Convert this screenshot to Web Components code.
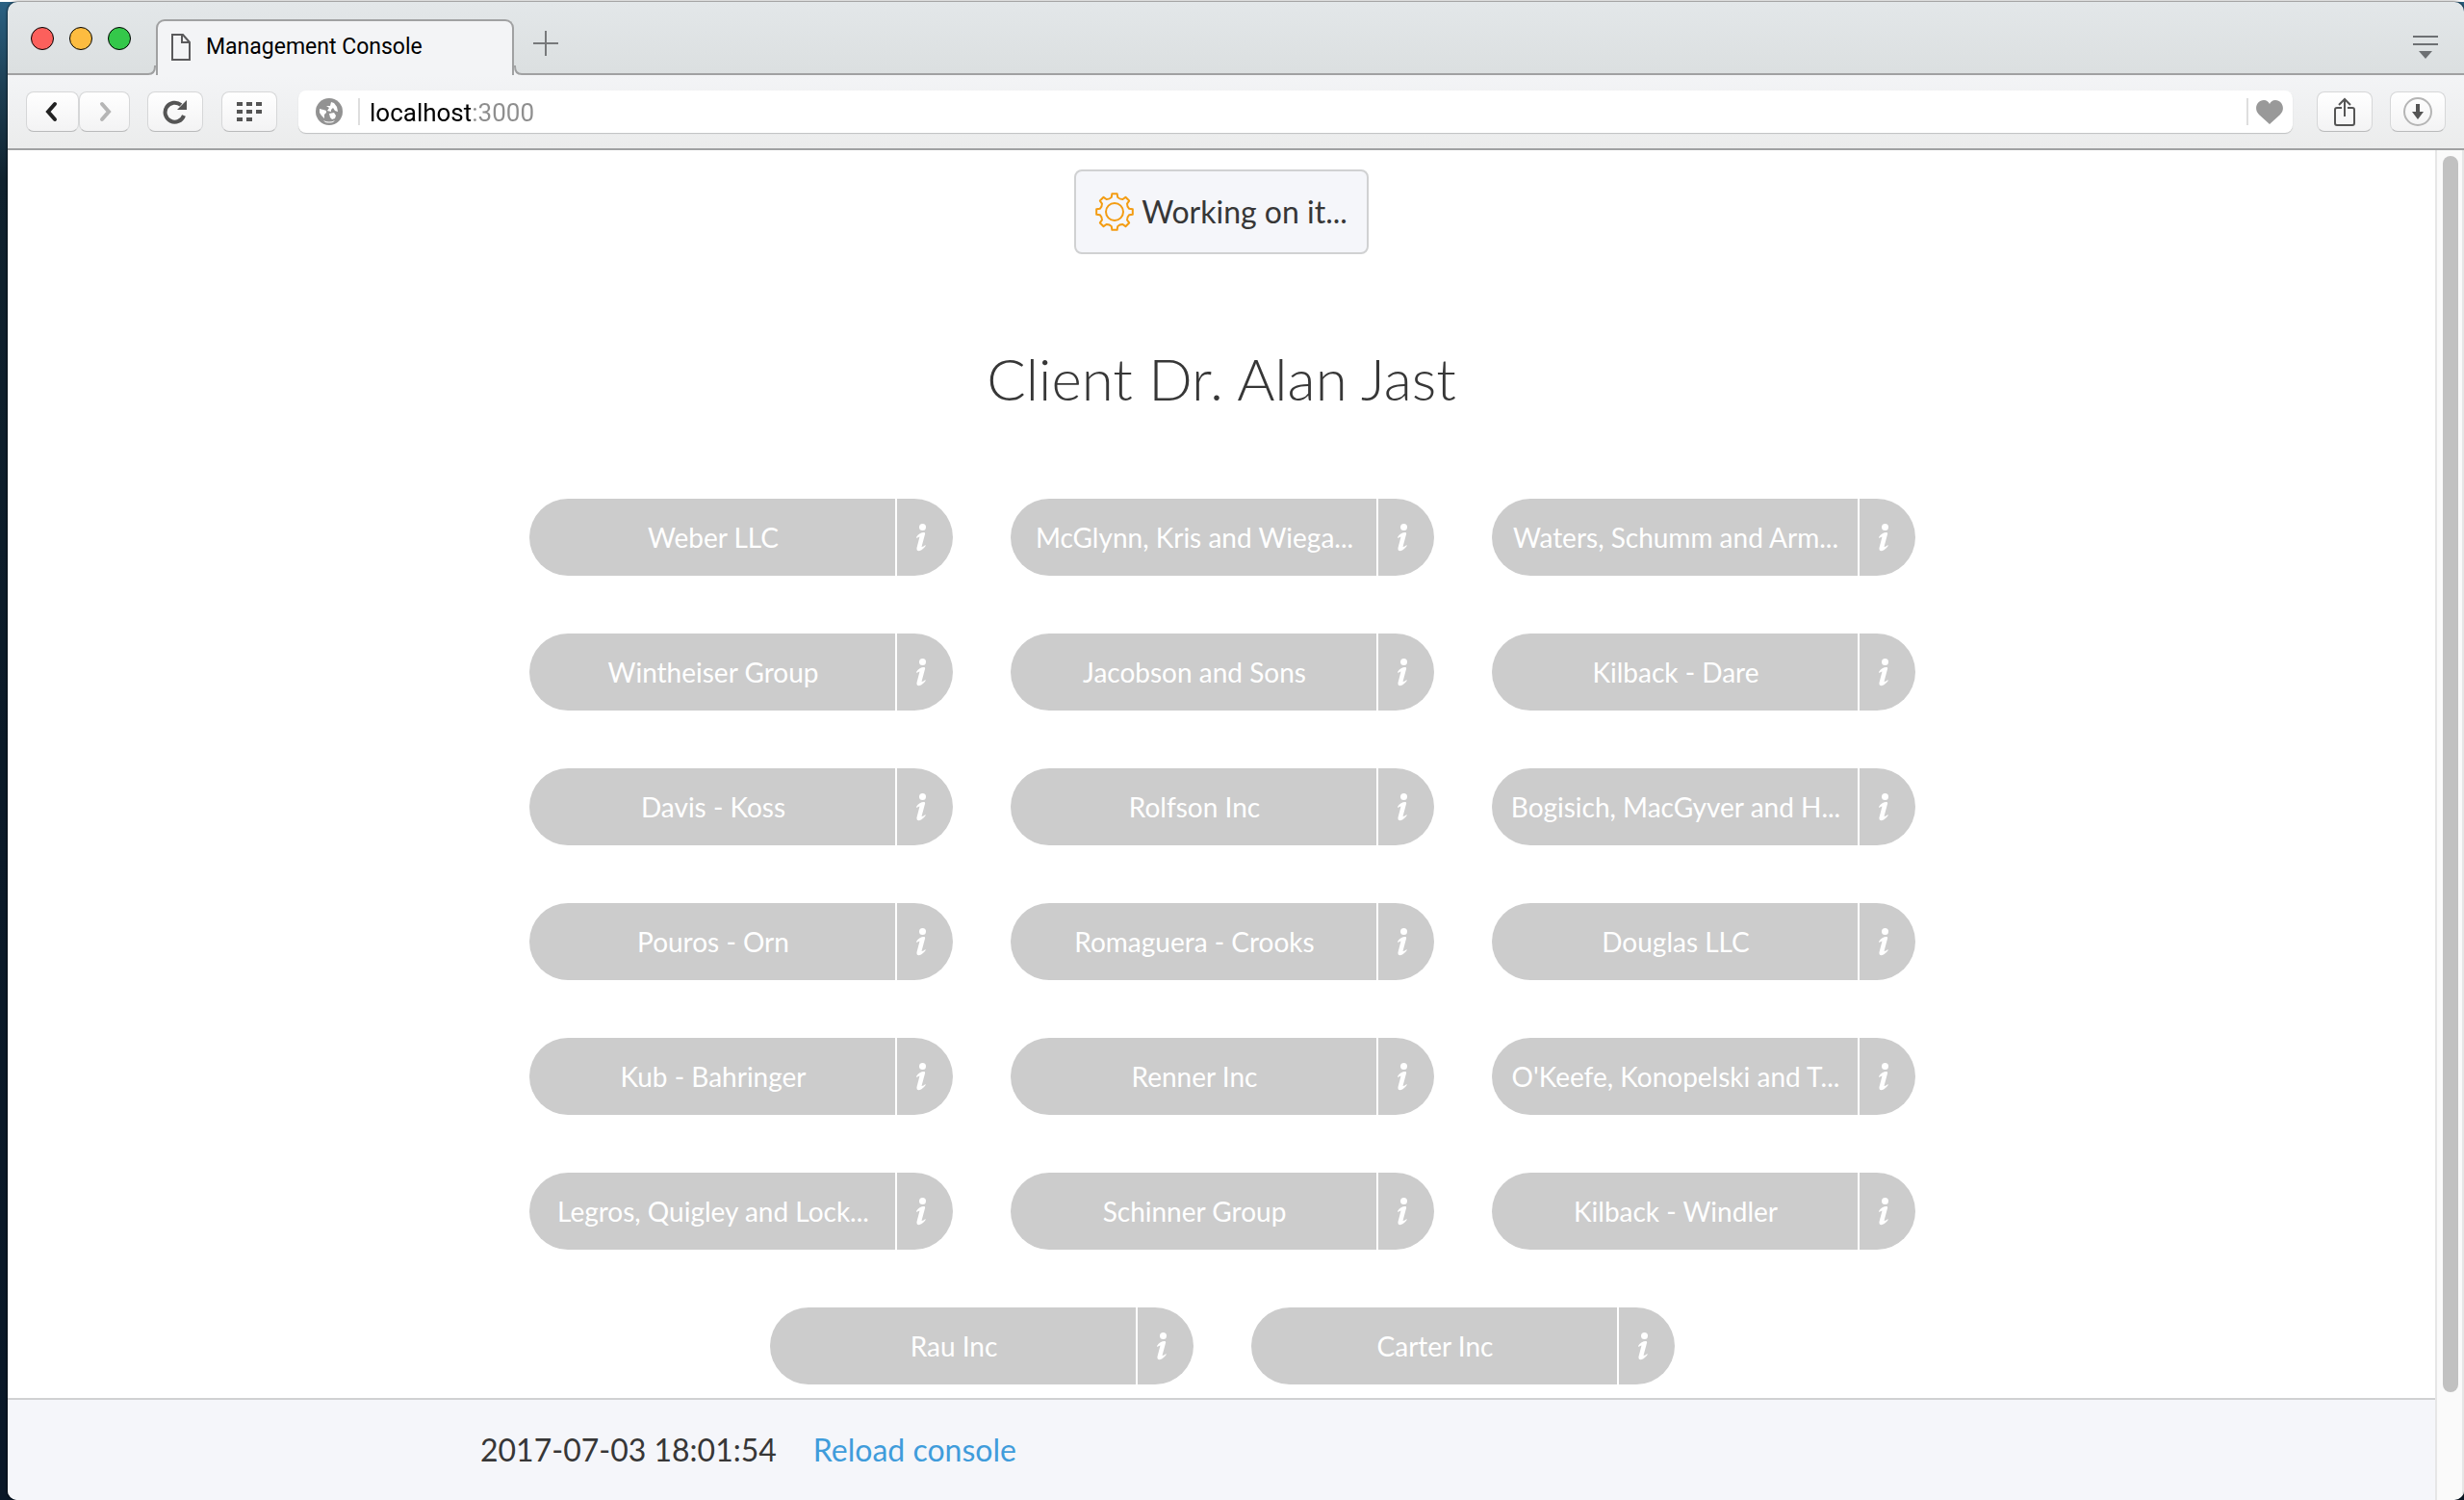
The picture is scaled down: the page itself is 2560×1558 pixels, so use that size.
<!DOCTYPE html>
<html lang="en">
<head>
<meta charset="utf-8">
<title>Management Console</title>
<style>
html, body { margin: 0; height: 100%; }
body { background: linear-gradient(#2b6284, #1d3e52 6%, #10222e 12%, #0b1a28 50%, #0a1828); }
</style>
</head>
<body>
<browser-window></browser-window>
<script>
const define = (name, markup, init) => customElements.define(name, class extends HTMLElement {
  constructor() {
    super();
    this.attachShadow({ mode: 'open' }).innerHTML = markup;
  }
  connectedCallback() { if (init) init(this, this.shadowRoot); }
});

define('tab-strip', `
<style>
:host { display: flex; height: 76px; background: linear-gradient(#e3e7e9, #dbdfe0); }
* { box-sizing: border-box; }
.lights, .rest { border-bottom: 2px solid #a0a1a2; display: flex; align-items: center; }
.lights { gap: 16px; padding: 2px 0 0 24px; width: 146px; }
.lights button { width: 24px; height: 24px; border-radius: 50%; padding: 0; border: 1px solid; }
.close { background: #fc605c; border-color: #dd4744; }
.min { background: #fdbc40; border-color: #dc9d33; }
.max { background: #34c84a; border-color: #27a534; }
svg { display: block; flex: none; }
.tab { margin-top: 18px; width: 372px; border: 2px solid #a0a1a2; border-bottom: 0; border-radius: 9px 9px 0 0;
  background: #f3f4f6; display: flex; align-items: center; gap: 16px; padding: 0 0 3px 14px;
  font: 23px/32px Roboto, sans-serif; color: #000; text-align: left; }
.rest { flex: 1; justify-content: space-between; padding: 0 27px 0 12px; }
.icon { background: none; border: 0; padding: 0; }
.new { margin: 12px 0 0 0; height: 36px; }
.foot { align-self: flex-end; }
.menu { margin-top: 20px; }
</style>
<div class="lights"><button class="close" aria-label="Close"></button><button class="min" aria-label="Minimise"></button><button class="max" aria-label="Zoom"></button></div>
<svg class="foot" width="8" height="10" viewBox="0 0 8 10"><path d="M0 9Q7 9 7 1V0H8V10H0Z" fill="#f3f4f6"/><path d="M0 9Q7 9 7 1V0" fill="none" stroke="#a0a1a2" stroke-width="2"/></svg>
<button class="tab" role="tab" aria-selected="true">
<svg width="20" height="28" viewBox="0 0 20 28" fill="none" stroke="#5a5a5c" stroke-width="2"><path d="M1 1H12L19 9V27H1Z"/><path d="M11 1V9H19"/></svg>
<span>Management Console</span></button>
<svg class="foot" width="8" height="10" viewBox="0 0 8 10"><path d="M8 9Q1 9 1 1V0H0V10H8Z" fill="#f3f4f6"/><path d="M8 9Q1 9 1 1V0" fill="none" stroke="#a0a1a2" stroke-width="2"/></svg>
<div class="rest">
<button class="icon new" aria-label="New tab"><svg width="26" height="26" viewBox="0 0 26 26" stroke="#77797b" stroke-width="2"><path d="M13 0V26M0 13H26"/></svg></button>
<button class="icon menu" aria-label="Tab menu"><svg width="26" height="24" viewBox="0 0 26 24" fill="#6d7073"><path d="M0 0H26V2H0ZM0 8H26V10H0ZM6 16H20L13 24Z"/></svg></button>
</div>`);

define('tool-button', `
<style>
:host { display: block; flex: none; width: 58px; }
button { box-sizing: border-box; width: 100%; height: 42px; padding: 0; display: flex; align-items: center; justify-content: center;
  border: 1px solid #d6d7d8; border-bottom-color: #b9babb; border-radius: 8px; background: linear-gradient(#fff, #f3f3f4); }
</style>
<button><slot></slot></button>`, (el, root) => root.querySelector('button').setAttribute('aria-label', el.getAttribute('label')));

define('address-bar', `
<style>
:host { display: block; flex: 1; }
label { display: flex; align-items: center; height: 44px; box-sizing: border-box; background: #fff; border-radius: 8px;
  box-shadow: 0 1px 1px #bfc0c1; padding: 0 10px 0 18px; }
svg { display: block; flex: none; }
i { width: 2px; height: 28px; background: #dedede; flex: none; }
.globe { margin-right: 16px; }
.heart { margin-left: 8px; }
input { flex: 1; min-width: 0; border: 0; outline: 0; padding: 2px 0 0 10px; height: 40px; font: 26px/40px Roboto, sans-serif; color: #000;
  background: linear-gradient(90deg, #000 115px, #8e8e8e 115px); -webkit-background-clip: text; background-clip: text; -webkit-text-fill-color: transparent; }
</style>
<label>
<svg class="globe" width="28" height="28" viewBox="0 0 28 28"><circle cx="14" cy="14" r="14" fill="#929292"/><path fill="#fff" d="M4 11L8 12 11 13 11 15 9 17 9 21 6 18 4 15ZM11 8L15 8 16 4 19 5 22 9 23 14 20 13 18 10 16 12 16 14 12 13 14 10ZM14 16L19 15 21 18 20 21 17 22 15 20ZM8 23Q14 26 20 23L18 25Q14 26 10 25Z"/></svg>
<i></i><input type="text" value="localhost:3000" aria-label="Address"><i></i>
<svg class="heart" width="28" height="25" viewBox="0 0 28 25"><path fill="#999" d="M14 25L3 15C-3 9 1 0 8 0 11 0 13 2 14 4 15 2 17 0 20 0 27 0 31 9 25 15Z"/></svg>
</label>`);

define('nav-bar', `
<style>
:host { display: flex; align-items: center; box-sizing: border-box; height: 78px; padding: 0 19px; border-bottom: 2px solid #a0a1a2;
  background: linear-gradient(#f3f4f6, #ebecec); }
.back { width: 55px; }
.fwd { width: 53px; }
.reload { margin-left: 18px; }
.grid { margin: 0 22px 0 19px; }
.share { margin: 0 18px 0 25px; }
</style>
<tool-button class="back" label="Back"><svg width="18" height="22" viewBox="0 0 18 22" fill="none" stroke="#222" stroke-width="4" stroke-linecap="round"><path d="M11 3L4 11 11 19"/></svg></tool-button>
<tool-button class="fwd" label="Forward"><svg width="14" height="22" viewBox="0 0 14 22" fill="none" stroke="#b5b5b5" stroke-width="4" stroke-linecap="round"><path d="M4 3L11 11 4 19"/></svg></tool-button>
<tool-button class="reload" label="Reload"><svg width="26" height="26" viewBox="0 0 26 26"><path d="M22 17A10 10 0 1 1 19 6" fill="none" stroke="#555" stroke-width="4"/><path d="M25 1V11H15Z" fill="#555"/></svg></tool-button>
<tool-button class="grid" label="Speed dial"><svg width="26" height="20" viewBox="0 0 26 20" fill="#555"><path d="M0 0h6v4H0zM10 0h6v4h-6zM20 0h6v4h-6zM0 8h6v4H0zM10 8h6v4h-6zM20 8h6v4h-6zM0 16h6v4H0zM10 16h6v4h-6z"/></svg></tool-button>
<address-bar></address-bar>
<tool-button class="share" label="Share"><svg width="22" height="30" viewBox="0 0 22 30" fill="none" stroke="#555" stroke-width="2"><path d="M8 11H3Q1 11 1 13V27Q1 29 3 29H19Q21 29 21 27V13Q21 11 19 11H14M11 20V2M5 8L11 2 17 8"/></svg></tool-button>
<tool-button label="Downloads"><svg width="30" height="30" viewBox="0 0 30 30"><circle cx="15" cy="15" r="14" fill="none" stroke="#b5b5b5" stroke-width="2"/><path fill="#555" d="M13 7H17V15H21L15 23 9 15H13Z"/></svg></tool-button>`);

define('client-pill', `
<style>
:host { display: flex; width: 440px; height: 80px; gap: 2px; font: 28px/40px Lato, sans-serif; }
button { border: 0; background: #ccc; color: #fff; font: inherit; height: 80px; box-sizing: border-box; }
.name { width: 380px; border-radius: 40px 0 0 40px; padding: 0 16px 0 18px; overflow: hidden; white-space: nowrap; text-overflow: ellipsis; text-align: center; }
.info { width: 58px; border-radius: 0 40px 40px 0; padding: 0 8px 0 0; display: flex; align-items: center; justify-content: center; }
</style>
<button class="name"><slot></slot></button><button class="info" aria-label="Info"><svg width="12" height="29" viewBox="0 0 12 29" fill="#fff"><circle cx="7.500" cy="3.500" r="3.500"/><path d="M1 14C3 10.500 6 9 9 9Q10.500 9 10 11L6.500 24Q8.500 24 10.500 22 11 23 9.500 24.500C6 28.500 1 30 1.500 25L4.500 13.500Q3 13.500 1.500 15Z"/></svg></button>`);

define('status-box', `
<style>
:host { display: flex; align-items: center; gap: 8px; box-sizing: border-box; height: 88px; padding: 0 20px; border: 2px solid #d0d1d2; border-radius: 8px;
  background: #f5f6fa; color: #373737; font: 32px/48px Lato, sans-serif; }
svg { display: block; }
</style>
<svg width="40" height="40" viewBox="0 0 40 40" fill="none" stroke="#f39c12" stroke-width="2" stroke-linejoin="round"><circle cx="20" cy="20" r="9"/><path class="teeth"/></svg>
<span role="status"><slot></slot></span>`, (el, root) => {
  // Eight teeth, 45 degrees apart, joined by shallow valleys.
  const at = (r, deg) => {
    const a = deg * Math.PI / 180;
    return (20 + r * Math.sin(a)).toFixed(2) + ' ' + (20 - r * Math.cos(a)).toFixed(2);
  };
  let d = '';
  for (let k = 0; k < 8; k++) {
    const a = k * 45;
    d += (k ? 'L' : 'M') + at(15.5, a - 12) + 'L' + at(19, a - 8) + 'L' + at(19, a + 8) + 'L' + at(15.5, a + 12) + 'Q' + at(14, a + 22.5) + ' ' + at(15.5, a + 33);
  }
  root.querySelector('.teeth').setAttribute('d', d + 'Z');
});

define('client-console', `
<style>
:host { display: flex; flex-direction: column; flex: 1; min-width: 0; background: #fff; color: #373737; font-family: Lato, sans-serif; }
main { flex: 1; min-height: 0; overflow: hidden; display: flex; flex-direction: column; align-items: center; padding-top: 20px; }
h1 { margin: 84px 0 0; font: 300 60px/90px Lato, sans-serif; }
.clients { display: flex; flex-wrap: wrap; justify-content: center; gap: 60px; width: 100%; max-width: 1500px; margin-top: 80px; padding-left: 2px; }
footer { flex: none; box-sizing: border-box; height: 106px; border-top: 2px solid #d0d1d2; background: #f5f6fa; font-size: 32px; line-height: 48px; padding-top: 28px; }
.row { max-width: 1540px; margin: 0 auto; display: flex; gap: 38px; }
a { color: #3f9cdb; text-decoration: none; }
</style>
<main>
<status-box>Working on it...</status-box>
<h1>Client Dr. Alan Jast</h1>
<div class="clients"></div>
</main>
<footer><div class="row"><time datetime="2017-07-03T18:01:54">2017-07-03 18:01:54</time><a href="#">Reload console</a></div></footer>`, (el, root) => {
  const names = ['Weber LLC', 'McGlynn, Kris and Wiega...', 'Waters, Schumm and Arm...', 'Wintheiser Group', 'Jacobson and Sons', 'Kilback - Dare',
    'Davis - Koss', 'Rolfson Inc', 'Bogisich, MacGyver and H...', 'Pouros - Orn', 'Romaguera - Crooks', 'Douglas LLC',
    'Kub - Bahringer', 'Renner Inc', "O'Keefe, Konopelski and T...", 'Legros, Quigley and Lock...', 'Schinner Group', 'Kilback - Windler',
    'Rau Inc', 'Carter Inc'];
  root.querySelector('.clients').append(...names.map(name => {
    const pill = document.createElement('client-pill');
    pill.textContent = name;
    return pill;
  }));
});

define('scroll-track', `
<style>
:host { display: block; box-sizing: border-box; width: 30px; flex: none; background: #fafafa; border: solid #e6e6e6; border-width: 0 2px; padding: 6px 4px 0 6px; }
div { height: 92%; border-radius: 8px; background: #c1c1c1; }
</style>
<div></div>`);

define('browser-window', `
<style>
:host { display: block; box-sizing: border-box; height: 100vh; border-top: 2px solid #fff; padding-left: 8px; }
.frame { display: flex; flex-direction: column; height: 100%; border-radius: 10px; overflow: hidden; box-shadow: 0 0 3px #000; }
.page { flex: 1; min-height: 0; display: flex; }
</style>
<div class="frame"><tab-strip></tab-strip><nav-bar></nav-bar>
<div class="page"><client-console></client-console><scroll-track></scroll-track></div></div>`);
</script>
</body>
</html>
